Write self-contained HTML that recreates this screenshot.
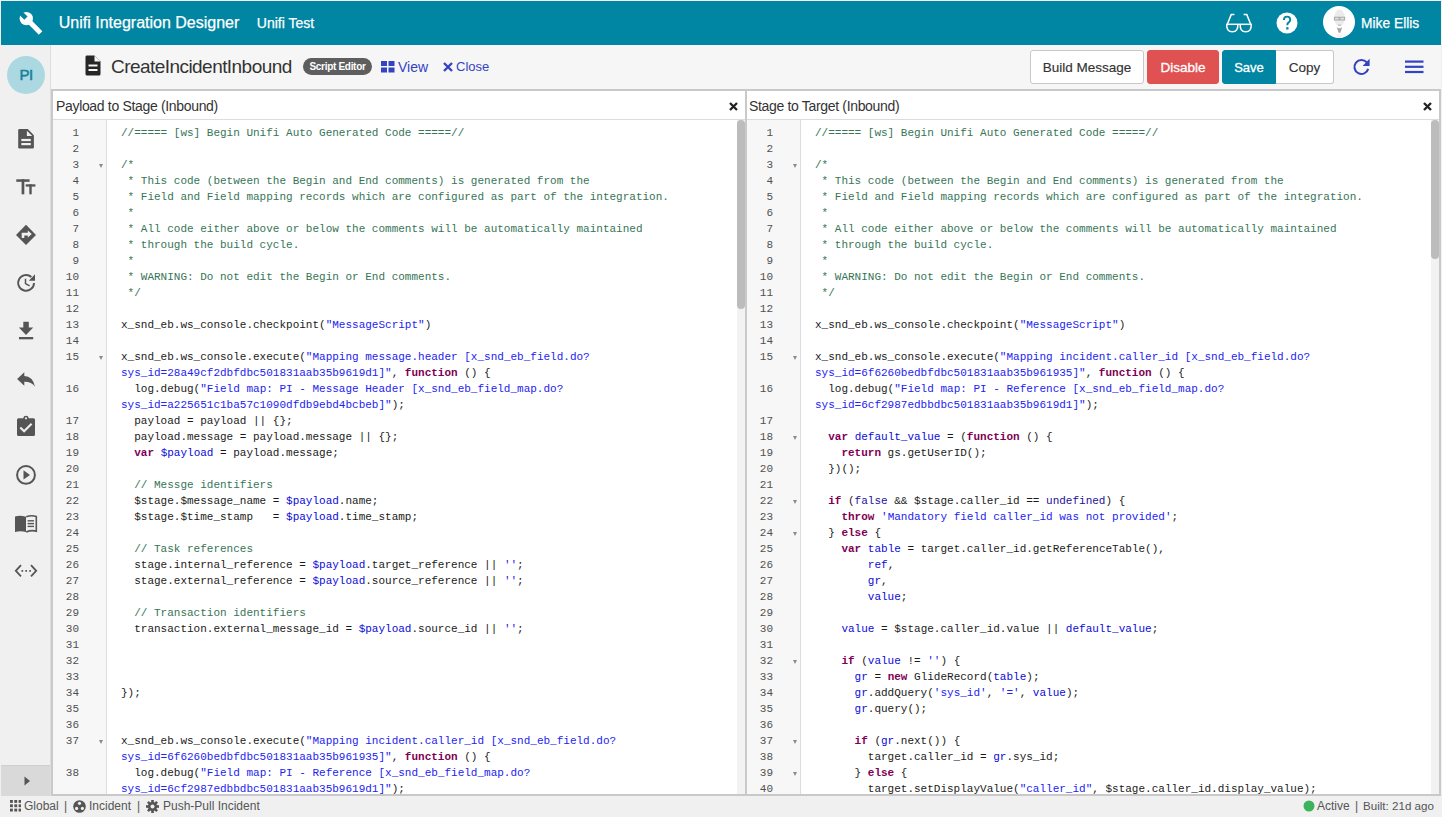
<!DOCTYPE html>
<html><head><meta charset="utf-8">
<style>
*{box-sizing:border-box;margin:0;padding:0}
html,body{width:1442px;height:817px;overflow:hidden}
body{position:relative;background:#f4efef;font-family:"Liberation Sans",sans-serif;color:#333}
.abs{position:absolute}
#hdr{left:1px;top:1px;width:1440px;height:44px;background:#0085a3;color:#fff}
#hdr .t1{position:absolute;left:57.8px;top:12px;font-size:16px;line-height:19px;white-space:nowrap;-webkit-text-stroke:0.25px #fff}
#hdr .t2{position:absolute;left:255.8px;top:14px;font-size:14px;line-height:16px;white-space:nowrap;-webkit-text-stroke:0.25px #fff}
#hdr .un{position:absolute;left:1360px;top:14.9px;font-size:13.8px;line-height:16px;white-space:nowrap;-webkit-text-stroke:0.25px #fff}
#side{left:1px;top:45px;width:50px;height:751px;background:#f0f0f0;border-right:1px solid #dedede}
#tb{left:51px;top:45px;width:1390px;height:44px;background:#f6f6f6}
.ttl{position:absolute;left:111px;top:55.6px;font-size:19px;line-height:22px;letter-spacing:-0.55px;color:#333;white-space:nowrap}
.badge{position:absolute;left:303px;top:58px;width:69px;height:17px;border-radius:9px;background:#5e5e5e;color:#fff;font-weight:bold;font-size:10px;line-height:17px;text-align:center;letter-spacing:-0.3px;white-space:nowrap}
.lnk{position:absolute;color:#3343c2;font-size:14px;line-height:16px;white-space:nowrap}
.btn{position:absolute;top:50px;height:34px;border:1px solid #c8c8c8;background:#fff;color:#333;font-size:13.5px;line-height:33.4px;text-align:center;border-radius:3px;white-space:nowrap;-webkit-text-stroke:0.15px currentColor}
#wrap{left:51px;top:89px;width:1390px;height:707px;border:2px solid #c9c9c9;background:#fff}
.pnl{position:absolute;top:0;height:703px;background:#fff}
.ph{position:absolute;left:0;top:0;right:0;height:29px;border-bottom:1px solid #dcdcdc}
.ph .pt{position:absolute;left:3px;top:6.5px;font-size:14px;line-height:16px;letter-spacing:-0.33px;color:#333;white-space:nowrap}
.ph svg{position:absolute;top:11px}
.gut{position:absolute;left:0;top:29px;width:54px;bottom:0;background:#f7f7f7;border-right:1px solid #dddddd;overflow:hidden}
.gl{position:relative}
.ln{position:absolute;left:0;width:26px;text-align:right;top:0;font-family:"Liberation Mono",monospace;font-size:11px;line-height:16px;color:#505050}
.fd{position:absolute;left:46px;top:7px;width:0;height:0;border-left:2.5px solid transparent;border-right:2.5px solid transparent;border-top:4px solid #8a8a8a}
.gin{position:absolute;left:0;top:5px;width:54px}
.code{position:absolute;left:54px;top:29px;right:0;bottom:0;overflow:hidden}
.cin{position:absolute;left:14px;top:5px;white-space:pre;font-family:"Liberation Mono",monospace;font-size:11px;line-height:16px;color:#1a1a1a}
.cl{height:16px}
.cm{color:#367556}
.st{color:#2222f2}
.kw{color:#7f0055;font-weight:bold}
.v2{color:#0a0ad8}
.at{color:#221199}
.track{position:absolute;right:0;top:29px;width:8px;bottom:0;background:#f2f2f2}
.thumb{position:absolute;left:0;top:0;width:8px;border-radius:4px;background:#bcbcbc}
#div{left:745px;top:91px;width:2px;height:703px;background:#c9c9c9}
#ftr{left:1px;top:796px;width:1440px;height:20px;background:#f0f0f0;color:#555;font-size:12px;line-height:14px}
#ftr span{position:absolute;top:3px;white-space:nowrap}
#tog{left:1px;top:765px;width:49px;height:31px;background:#d9d9d9;border-top:1px solid #cfcfcf}
</style></head><body>
<div id="hdr" class="abs">
  <svg class="abs" style="left:18.4px;top:9.8px" width="25" height="25" viewBox="0 0 25 25"><circle cx="7.3" cy="7.6" r="6.7" fill="#fff"/><path d="M9.07 5.83 L23.37 20.13 L19.83 23.67 L5.53 9.37 Z" fill="#fff"/><path d="M8.57 5.62 L1.86 -1.10 L-1.40 2.16 L5.32 8.87 Z" fill="#0085a3"/></svg>
  <div class="t1">Unifi Integration Designer</div>
  <div class="t2">Unifi Test</div>
  <svg class="abs" style="left:1219.3px;top:9px" width="36" height="26" viewBox="1220 10 36 26"><g fill="none" stroke="#fff" stroke-width="1.5"><path d="M1226.3 24.3 H1251.7"/><path d="M1226.8 24.3 Q1226.3 31.8 1232.3 31.8 Q1238.3 31.8 1237.8 24.3"/><path d="M1240.2 24.3 Q1239.7 31.8 1245.7 31.8 Q1251.7 31.8 1251.2 24.3"/><path d="M1227.3 24.3 L1231.2 14.6 H1234.4"/><path d="M1250.7 24.3 L1246.8 14.6 H1243.6"/></g></svg>
  <svg class="abs" style="left:1274.6px;top:11.3px" width="22" height="22" viewBox="0 0 22 22"><circle cx="11" cy="11" r="10.5" fill="#fff"/><path d="M7.9 8 Q7.9 4.6 11.1 4.6 Q14.2 4.6 14.2 7.7 Q14.2 9.5 12.4 10.6 Q11.3 11.3 11.3 13.2" fill="none" stroke="#0085a3" stroke-width="1.9"/><rect x="10.2" y="15.2" width="2.3" height="2.3" fill="#0085a3"/></svg>
  <svg class="abs" style="left:1321px;top:4.3px" width="34" height="34" viewBox="0 0 34 34"><circle cx="17" cy="17" r="16" fill="#fff"/><ellipse cx="17.5" cy="13" rx="5.3" ry="8.5" fill="#ebebeb"/><rect x="12.3" y="12.2" width="4.8" height="2.8" fill="#e2e2e2" stroke="#9a9a9a" stroke-width="0.8"/><rect x="17.9" y="12.2" width="4.8" height="2.8" fill="#e2e2e2" stroke="#9a9a9a" stroke-width="0.8"/><path d="M15.8 19.5 H19.2 L18.7 21 H16.3 Z" fill="#c4c4c4"/><path d="M14.8 22.3 Q17.5 24.2 20.2 22.3 L18.6 27.3 Q17.5 28.6 16.4 27.3 Z" fill="#a8a8a8"/><path d="M15 28 Q17.5 31 20 28 L20.5 33 H14.5 Z" fill="#f2f2f2"/></svg>
  <div class="un">Mike Ellis</div>
</div>

<div id="side" class="abs">
  <div class="abs" style="left:6px;top:11px;width:38px;height:38px;border-radius:50%;background:#acd8e1;color:#15809c;font-size:15px;line-height:38px;text-align:center;letter-spacing:-0.6px;-webkit-text-stroke:0.5px #15809c">PI</div>
</div>
<svg class="abs" style="left:0;top:0" width="51" height="817" viewBox="0 0 51 817">
<g fill="#555">
<!-- doc -->
<path d="M19.5 129.1 H27.8 L33.9 135.2 V147.3 Q33.9 148.6 32.6 148.6 H19.5 Q18.2 148.6 18.2 147.3 V130.4 Q18.2 129.1 19.5 129.1 Z"/>
</g>
<path d="M26.9 130.7 V136 H32.2 Z" fill="#f0f0f0"/>
<rect x="21.3" y="138.9" width="9.5" height="2.2" fill="#f0f0f0"/>
<rect x="21.3" y="143" width="9.5" height="2.2" fill="#f0f0f0"/>
<g fill="#555">
<!-- Tt -->
<rect x="16.3" y="179.3" width="13.3" height="2.5"/>
<rect x="21.6" y="179.3" width="2.7" height="15"/>
<rect x="25.7" y="184.3" width="9.7" height="2.3"/>
<rect x="29.3" y="184.3" width="2.4" height="10"/>
<!-- diamond -->
<path d="M26 224.7 L36 234.9 L26 245.1 L16 234.9 Z"/>
</g>
<path d="M21.7 238 V232.7 H27.8 V230.6 L31.8 234.05 L27.8 237.5 V235.4 H24.3 V238 Z" fill="#f0f0f0"/>
<!-- history -->
<path d="M34 282.9 A7.9 7.9 0 1 1 31.4 277" fill="none" stroke="#555" stroke-width="1.9"/>
<path d="M28.8 280.8 L35 280.8 L35 274.2 Z" fill="#555"/>
<path d="M25.5 278.8 V283.6 L29.6 285.9" fill="none" stroke="#555" stroke-width="1.5"/>
<g fill="#555">
<!-- download -->
<path d="M23.3 321.7 H28.8 V327.5 H33.2 L26 335 L18.9 327.5 H23.3 Z"/>
<rect x="19" y="337" width="14.2" height="2.3"/>
<!-- reply -->
<path d="M17.1 379 L24.3 372.2 V376.1 Q33 376.5 35 386.8 Q31.5 381.5 24.3 381.7 V385.8 Z"/>
<!-- clipboard -->
<path d="M18.5 418.2 H23.2 Q23.6 415.8 26 415.8 Q28.4 415.8 28.8 418.2 H33.5 Q35 418.2 35 419.7 V434.4 Q35 435.9 33.5 435.9 H18.5 Q17 435.9 17 434.4 V419.7 Q17 418.2 18.5 418.2 Z"/>
</g>
<circle cx="26" cy="418.3" r="1.1" fill="#f0f0f0"/>
<path d="M20.3 427.6 L24.1 431.2 L31.6 423.8" fill="none" stroke="#f0f0f0" stroke-width="2.1"/>
<!-- play circle -->
<circle cx="26" cy="474.9" r="8.9" fill="none" stroke="#555" stroke-width="2"/>
<path d="M23.5 470.3 L30 474.9 L23.5 479.5 Z" fill="#555"/>
<!-- book -->
<path d="M15 516.5 Q20 515 26 516.8 V532 Q20.5 530.5 15 532 Z" fill="#555"/>
<path d="M26.2 516.8 Q31.5 515 36.3 516.5 V531.2 Q31.5 529.8 26.2 532" fill="none" stroke="#555" stroke-width="1.6"/>
<g stroke="#555" stroke-width="1.4"><path d="M27.6 520.8 H34"/><path d="M27.6 523.6 H34"/><path d="M27.6 526.4 H34"/></g>
<!-- code -->
<path d="M21 565.2 L15.8 570.8 L21 576.4" fill="none" stroke="#555" stroke-width="1.8"/>
<path d="M31 565.2 L36.2 570.8 L31 576.4" fill="none" stroke="#555" stroke-width="1.8"/>
<rect x="21.5" y="570" width="1.6" height="1.8" fill="#555"/>
<rect x="25.4" y="570" width="1.6" height="1.8" fill="#555"/>
<rect x="29.3" y="570" width="1.6" height="1.8" fill="#555"/>
</svg>

<div id="tog" class="abs"><svg class="abs" style="left:23px;top:10px" width="7" height="10" viewBox="0 0 7 10"><path d="M0.5 0.5 L6 5 L0.5 9.5 Z" fill="#555"/></svg></div>

<div id="tb" class="abs"></div>
<svg class="abs" style="left:84.6px;top:55px" width="16" height="21" viewBox="0 0 16 21"><path d="M1.5 0.5 H9.5 L15.5 6.5 V19 Q15.5 20.5 14 20.5 H2 Q0.5 20.5 0.5 19 V2 Q0.5 0.5 1.5 0.5 Z" fill="#262626"/><path d="M9.5 0.5 V6.5 H15.5 Z" fill="#f6f6f6"/><rect x="3.5" y="9.5" width="9" height="2" fill="#f6f6f6"/><rect x="3.5" y="14" width="9" height="2" fill="#f6f6f6"/></svg>
<div class="ttl">CreateIncidentInbound</div>
<div class="badge">Script Editor</div>
<svg class="abs" style="left:381px;top:61px" width="14" height="12" viewBox="0 0 14 12"><rect x="0" y="0" width="6" height="5" fill="#3343c2"/><rect x="7.5" y="0" width="6" height="5" fill="#3343c2"/><rect x="0" y="6.5" width="6" height="5" fill="#3343c2"/><rect x="7.5" y="6.5" width="6" height="5" fill="#3343c2"/></svg>
<div class="lnk" style="left:398px;top:59px">View</div>
<svg class="abs" style="left:443px;top:62px" width="10" height="10" viewBox="0 0 10 10"><path d="M1 1 L9 9 M9 1 L1 9" stroke="#3343c2" stroke-width="2.4"/></svg>
<div class="lnk" style="left:456px;top:59px;font-size:13px">Close</div>

<div class="btn" style="left:1030px;width:114px">Build Message</div>
<div class="btn" style="left:1147px;width:72px;background:#e05252;border-color:#e05252;color:#fff;-webkit-text-stroke:0.3px #fff">Disable</div>
<div class="btn" style="left:1222px;width:54px;background:#0085a3;border-color:#0085a3;color:#fff;border-radius:3px 0 0 3px;font-size:13px;-webkit-text-stroke:0.3px #fff">Save</div>
<div class="btn" style="left:1276px;width:58px;border-left:none;border-radius:0 3px 3px 0">Copy</div>
<svg class="abs" style="left:1350px;top:55px" width="22" height="22" viewBox="1350 55 22 22"><path d="M1368.2 68.9 A7 7 0 1 1 1366.8 62.4" fill="none" stroke="#3343c2" stroke-width="2.1"/><path d="M1362.6 65.9 L1369.6 65.9 L1369.6 58.8 Z" fill="#3343c2"/></svg>
<svg class="abs" style="left:1405px;top:60px" width="19" height="14" viewBox="0 0 19 14"><rect x="0" y="0.5" width="18.5" height="2.2" fill="#3343c2"/><rect x="0" y="5.7" width="18.5" height="2.2" fill="#3343c2"/><rect x="0" y="10.9" width="18.5" height="2.2" fill="#3343c2"/></svg>

<div id="wrap" class="abs">
  <div class="pnl" style="left:0;width:692px">
    <div class="ph"><div class="pt">Payload to Stage (Inbound)</div><svg style="left:676px" width="9" height="9" viewBox="0 0 9 9"><path d="M1 1 L8 8 M8 1 L1 8" stroke="#222" stroke-width="2.3"/></svg></div>
    <div class="gut"><div class="gin"><div class="gl" style="height:16px"><span class="ln">1</span></div><div class="gl" style="height:16px"><span class="ln">2</span></div><div class="gl" style="height:16px"><span class="ln">3</span><span class="fd"></span></div><div class="gl" style="height:16px"><span class="ln">4</span></div><div class="gl" style="height:16px"><span class="ln">5</span></div><div class="gl" style="height:16px"><span class="ln">6</span></div><div class="gl" style="height:16px"><span class="ln">7</span></div><div class="gl" style="height:16px"><span class="ln">8</span></div><div class="gl" style="height:16px"><span class="ln">9</span></div><div class="gl" style="height:16px"><span class="ln">10</span></div><div class="gl" style="height:16px"><span class="ln">11</span></div><div class="gl" style="height:16px"><span class="ln">12</span></div><div class="gl" style="height:16px"><span class="ln">13</span></div><div class="gl" style="height:16px"><span class="ln">14</span></div><div class="gl" style="height:32px"><span class="ln">15</span><span class="fd"></span></div><div class="gl" style="height:32px"><span class="ln">16</span></div><div class="gl" style="height:16px"><span class="ln">17</span></div><div class="gl" style="height:16px"><span class="ln">18</span></div><div class="gl" style="height:16px"><span class="ln">19</span></div><div class="gl" style="height:16px"><span class="ln">20</span></div><div class="gl" style="height:16px"><span class="ln">21</span></div><div class="gl" style="height:16px"><span class="ln">22</span></div><div class="gl" style="height:16px"><span class="ln">23</span></div><div class="gl" style="height:16px"><span class="ln">24</span></div><div class="gl" style="height:16px"><span class="ln">25</span></div><div class="gl" style="height:16px"><span class="ln">26</span></div><div class="gl" style="height:16px"><span class="ln">27</span></div><div class="gl" style="height:16px"><span class="ln">28</span></div><div class="gl" style="height:16px"><span class="ln">29</span></div><div class="gl" style="height:16px"><span class="ln">30</span></div><div class="gl" style="height:16px"><span class="ln">31</span></div><div class="gl" style="height:16px"><span class="ln">32</span></div><div class="gl" style="height:16px"><span class="ln">33</span></div><div class="gl" style="height:16px"><span class="ln">34</span></div><div class="gl" style="height:16px"><span class="ln">35</span></div><div class="gl" style="height:16px"><span class="ln">36</span></div><div class="gl" style="height:32px"><span class="ln">37</span><span class="fd"></span></div><div class="gl" style="height:32px"><span class="ln">38</span></div></div></div>
    <div class="code"><div class="cin"><div class="cl"><span class="cm">//===== [ws] Begin Unifi Auto Generated Code =====//</span></div><div class="cl">&#8203;</div><div class="cl"><span class="cm">/*</span></div><div class="cl"><span class="cm"> * This code (between the Begin and End comments) is generated from the</span></div><div class="cl"><span class="cm"> * Field and Field mapping records which are configured as part of the integration.</span></div><div class="cl"><span class="cm"> *</span></div><div class="cl"><span class="cm"> * All code either above or below the comments will be automatically maintained</span></div><div class="cl"><span class="cm"> * through the build cycle.</span></div><div class="cl"><span class="cm"> *</span></div><div class="cl"><span class="cm"> * WARNING: Do not edit the Begin or End comments.</span></div><div class="cl"><span class="cm"> */</span></div><div class="cl">&#8203;</div><div class="cl">x_snd_eb.ws_console.checkpoint(<span class="st">"MessageScript"</span>)</div><div class="cl">&#8203;</div><div class="cl">x_snd_eb.ws_console.execute(<span class="st">"Mapping message.header [x_snd_eb_field.do?</span></div><div class="cl"><span class="st">sys_id=28a49cf2dbfdbc501831aab35b9619d1]"</span>, <span class="kw">function</span> () {</div><div class="cl">  log.debug(<span class="st">"Field map: PI - Message Header [x_snd_eb_field_map.do?</span></div><div class="cl"><span class="st">sys_id=a225651c1ba57c1090dfdb9ebd4bcbeb]"</span>);</div><div class="cl">  payload = payload || {};</div><div class="cl">  payload.message = payload.message || {};</div><div class="cl">  <span class="kw">var</span> <span class="v2">$payload</span> = payload.message;</div><div class="cl">&#8203;</div><div class="cl">  <span class="cm">// Messge identifiers</span></div><div class="cl">  $stage.$message_name = <span class="v2">$payload</span>.name;</div><div class="cl">  $stage.$time_stamp   = <span class="v2">$payload</span>.time_stamp;</div><div class="cl">&#8203;</div><div class="cl">  <span class="cm">// Task references</span></div><div class="cl">  stage.internal_reference = <span class="v2">$payload</span>.target_reference || <span class="st">''</span>;</div><div class="cl">  stage.external_reference = <span class="v2">$payload</span>.source_reference || <span class="st">''</span>;</div><div class="cl">&#8203;</div><div class="cl">  <span class="cm">// Transaction identifiers</span></div><div class="cl">  transaction.external_message_id = <span class="v2">$payload</span>.source_id || <span class="st">''</span>;</div><div class="cl">&#8203;</div><div class="cl">&#8203;</div><div class="cl">&#8203;</div><div class="cl">});</div><div class="cl">&#8203;</div><div class="cl">&#8203;</div><div class="cl">x_snd_eb.ws_console.execute(<span class="st">"Mapping incident.caller_id [x_snd_eb_field.do?</span></div><div class="cl"><span class="st">sys_id=6f6260bedbfdbc501831aab35b961935]"</span>, <span class="kw">function</span> () {</div><div class="cl">  log.debug(<span class="st">"Field map: PI - Reference [x_snd_eb_field_map.do?</span></div><div class="cl"><span class="st">sys_id=6cf2987edbbdbc501831aab35b9619d1]"</span>);</div></div></div>
    <div class="track"><div class="thumb" style="top:0;height:189px"></div></div>
  </div>
  <div class="pnl" style="left:694px;width:692px">
    <div class="ph"><div class="pt" style="left:2px">Stage to Target (Inbound)</div><svg style="left:676px" width="9" height="9" viewBox="0 0 9 9"><path d="M1 1 L8 8 M8 1 L1 8" stroke="#222" stroke-width="2.3"/></svg></div>
    <div class="gut"><div class="gin"><div class="gl" style="height:16px"><span class="ln">1</span></div><div class="gl" style="height:16px"><span class="ln">2</span></div><div class="gl" style="height:16px"><span class="ln">3</span><span class="fd"></span></div><div class="gl" style="height:16px"><span class="ln">4</span></div><div class="gl" style="height:16px"><span class="ln">5</span></div><div class="gl" style="height:16px"><span class="ln">6</span></div><div class="gl" style="height:16px"><span class="ln">7</span></div><div class="gl" style="height:16px"><span class="ln">8</span></div><div class="gl" style="height:16px"><span class="ln">9</span></div><div class="gl" style="height:16px"><span class="ln">10</span></div><div class="gl" style="height:16px"><span class="ln">11</span></div><div class="gl" style="height:16px"><span class="ln">12</span></div><div class="gl" style="height:16px"><span class="ln">13</span></div><div class="gl" style="height:16px"><span class="ln">14</span></div><div class="gl" style="height:32px"><span class="ln">15</span><span class="fd"></span></div><div class="gl" style="height:32px"><span class="ln">16</span></div><div class="gl" style="height:16px"><span class="ln">17</span></div><div class="gl" style="height:16px"><span class="ln">18</span><span class="fd"></span></div><div class="gl" style="height:16px"><span class="ln">19</span></div><div class="gl" style="height:16px"><span class="ln">20</span></div><div class="gl" style="height:16px"><span class="ln">21</span></div><div class="gl" style="height:16px"><span class="ln">22</span><span class="fd"></span></div><div class="gl" style="height:16px"><span class="ln">23</span></div><div class="gl" style="height:16px"><span class="ln">24</span><span class="fd"></span></div><div class="gl" style="height:16px"><span class="ln">25</span></div><div class="gl" style="height:16px"><span class="ln">26</span></div><div class="gl" style="height:16px"><span class="ln">27</span></div><div class="gl" style="height:16px"><span class="ln">28</span></div><div class="gl" style="height:16px"><span class="ln">29</span></div><div class="gl" style="height:16px"><span class="ln">30</span></div><div class="gl" style="height:16px"><span class="ln">31</span></div><div class="gl" style="height:16px"><span class="ln">32</span><span class="fd"></span></div><div class="gl" style="height:16px"><span class="ln">33</span></div><div class="gl" style="height:16px"><span class="ln">34</span></div><div class="gl" style="height:16px"><span class="ln">35</span></div><div class="gl" style="height:16px"><span class="ln">36</span></div><div class="gl" style="height:16px"><span class="ln">37</span><span class="fd"></span></div><div class="gl" style="height:16px"><span class="ln">38</span></div><div class="gl" style="height:16px"><span class="ln">39</span><span class="fd"></span></div><div class="gl" style="height:16px"><span class="ln">40</span></div></div></div>
    <div class="code"><div class="cin"><div class="cl"><span class="cm">//===== [ws] Begin Unifi Auto Generated Code =====//</span></div><div class="cl">&#8203;</div><div class="cl"><span class="cm">/*</span></div><div class="cl"><span class="cm"> * This code (between the Begin and End comments) is generated from the</span></div><div class="cl"><span class="cm"> * Field and Field mapping records which are configured as part of the integration.</span></div><div class="cl"><span class="cm"> *</span></div><div class="cl"><span class="cm"> * All code either above or below the comments will be automatically maintained</span></div><div class="cl"><span class="cm"> * through the build cycle.</span></div><div class="cl"><span class="cm"> *</span></div><div class="cl"><span class="cm"> * WARNING: Do not edit the Begin or End comments.</span></div><div class="cl"><span class="cm"> */</span></div><div class="cl">&#8203;</div><div class="cl">x_snd_eb.ws_console.checkpoint(<span class="st">"MessageScript"</span>)</div><div class="cl">&#8203;</div><div class="cl">x_snd_eb.ws_console.execute(<span class="st">"Mapping incident.caller_id [x_snd_eb_field.do?</span></div><div class="cl"><span class="st">sys_id=6f6260bedbfdbc501831aab35b961935]"</span>, <span class="kw">function</span> () {</div><div class="cl">  log.debug(<span class="st">"Field map: PI - Reference [x_snd_eb_field_map.do?</span></div><div class="cl"><span class="st">sys_id=6cf2987edbbdbc501831aab35b9619d1]"</span>);</div><div class="cl">&#8203;</div><div class="cl">  <span class="kw">var</span> <span class="v2">default_value</span> = (<span class="kw">function</span> () {</div><div class="cl">    <span class="kw">return</span> gs.getUserID();</div><div class="cl">  })();</div><div class="cl">&#8203;</div><div class="cl">  <span class="kw">if</span> (<span class="at">false</span> &amp;&amp; $stage.caller_id == <span class="at">undefined</span>) {</div><div class="cl">    <span class="kw">throw</span> <span class="st">'Mandatory field caller_id was not provided'</span>;</div><div class="cl">  } <span class="kw">else</span> {</div><div class="cl">    <span class="kw">var</span> <span class="v2">table</span> = target.caller_id.getReferenceTable(),</div><div class="cl">        <span class="v2">ref</span>,</div><div class="cl">        <span class="v2">gr</span>,</div><div class="cl">        <span class="v2">value</span>;</div><div class="cl">&#8203;</div><div class="cl">    <span class="v2">value</span> = $stage.caller_id.value || <span class="v2">default_value</span>;</div><div class="cl">&#8203;</div><div class="cl">    <span class="kw">if</span> (<span class="v2">value</span> != <span class="st">''</span>) {</div><div class="cl">      <span class="v2">gr</span> = <span class="kw">new</span> GlideRecord(<span class="v2">table</span>);</div><div class="cl">      <span class="v2">gr</span>.addQuery(<span class="st">'sys_id'</span>, <span class="st">'='</span>, <span class="v2">value</span>);</div><div class="cl">      <span class="v2">gr</span>.query();</div><div class="cl">&#8203;</div><div class="cl">      <span class="kw">if</span> (<span class="v2">gr</span>.next()) {</div><div class="cl">        target.caller_id = <span class="v2">gr</span>.sys_id;</div><div class="cl">      } <span class="kw">else</span> {</div><div class="cl">        target.setDisplayValue(<span class="st">"caller_id"</span>, $stage.caller_id.display_value);</div></div></div>
    <div class="track"><div class="thumb" style="top:0;height:139px"></div></div>
  </div>
</div>
<div id="div" class="abs"></div>

<div id="ftr" class="abs">
  <svg class="abs" style="left:8.6px;top:4.3px" width="11.5" height="11.5" viewBox="0 0 12 12"><g fill="#555"><rect x="0" y="0" width="3" height="3"/><rect x="4.5" y="0" width="3" height="3"/><rect x="9" y="0" width="3" height="3"/><rect x="0" y="4.5" width="3" height="3"/><rect x="4.5" y="4.5" width="3" height="3"/><rect x="9" y="4.5" width="3" height="3"/><rect x="0" y="9" width="3" height="3"/><rect x="4.5" y="9" width="3" height="3"/><rect x="9" y="9" width="3" height="3"/></g></svg>
  <span style="left:23px">Global</span>
  <span style="left:63px">|</span>
  <svg class="abs" style="left:72px;top:4px" width="13" height="13" viewBox="0 0 13 13"><circle cx="6.5" cy="6.5" r="6.3" fill="#555"/><circle cx="6.5" cy="3.3" r="1.6" fill="#f0f0f0"/><circle cx="3.6" cy="8.4" r="1.6" fill="#f0f0f0"/><circle cx="9.4" cy="8.4" r="1.6" fill="#f0f0f0"/></svg>
  <span style="left:88px">Incident</span>
  <span style="left:136px">|</span>
  <svg class="abs" style="left:145px;top:4px" width="13" height="13" viewBox="0 0 13 13"><g fill="#555"><circle cx="6.5" cy="6.5" r="4.6"/><rect x="5.2" y="0" width="2.6" height="13"/><rect x="0" y="5.2" width="13" height="2.6"/><rect x="5.2" y="0" width="2.6" height="13" transform="rotate(45 6.5 6.5)"/><rect x="5.2" y="0" width="2.6" height="13" transform="rotate(-45 6.5 6.5)"/></g><circle cx="6.5" cy="6.5" r="2" fill="#f0f0f0"/></svg>
  <span style="left:162px">Push-Pull Incident</span>
  <svg class="abs" style="left:1302px;top:4px" width="12" height="12" viewBox="0 0 12 12"><circle cx="6" cy="6" r="5.5" fill="#3db35b"/></svg>
  <span style="left:1316px">Active</span>
  <span style="left:1354px">|</span>
  <span style="left:1362px;font-size:11.6px">Built: 21d ago</span>
</div>
</body></html>
